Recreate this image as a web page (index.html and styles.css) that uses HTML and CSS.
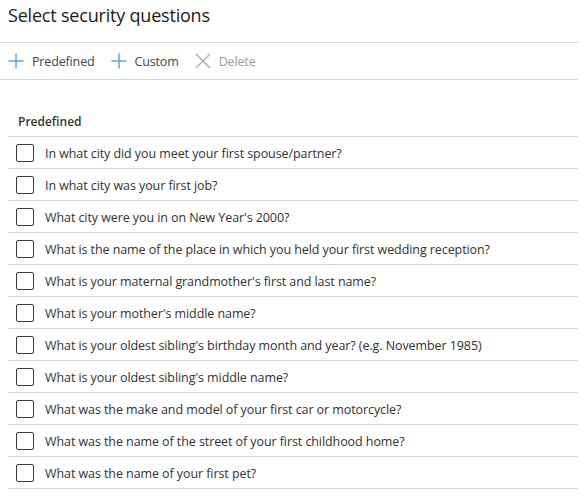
FILE: index.html
```html
<!DOCTYPE html>
<html>
<head>
<meta charset="utf-8">
<link rel="stylesheet" href="styles.css">
</head>
<body>
<div class="page">
  <h1 class="title">Select security questions</h1>
  <div class="toolbar">
    <button class="tool">
      <svg class="icon" viewBox="0 0 16 16"><path d="M8 0.5V15.5M0.5 8H15.5" stroke="#5ea6e2" stroke-width="1.5" fill="none"/></svg>
      <span>Predefined</span>
    </button>
    <button class="tool">
      <svg class="icon" viewBox="0 0 16 16"><path d="M8 0.5V15.5M0.5 8H15.5" stroke="#5ea6e2" stroke-width="1.5" fill="none"/></svg>
      <span>Custom</span>
    </button>
    <button class="tool disabled">
      <svg class="icon" viewBox="0 0 16 16"><path d="M1 1L15 15M15 1L1 15" stroke="#a6a6a6" stroke-width="1.2" fill="none"/></svg>
      <span>Delete</span>
    </button>
  </div>
  <div class="list">
    <div class="list-header">Predefined</div>
    <div class="row"><span class="check"></span><span class="label">In what city did you meet your first spouse/partner?</span></div>
    <div class="row"><span class="check"></span><span class="label">In what city was your first job?</span></div>
    <div class="row"><span class="check"></span><span class="label">What city were you in on New Year's 2000?</span></div>
    <div class="row"><span class="check"></span><span class="label">What is the name of the place in which you held your first wedding reception?</span></div>
    <div class="row"><span class="check"></span><span class="label">What is your maternal grandmother's first and last name?</span></div>
    <div class="row"><span class="check"></span><span class="label">What is your mother's middle name?</span></div>
    <div class="row"><span class="check"></span><span class="label">What is your oldest sibling's birthday month and year? (e.g. November 1985)</span></div>
    <div class="row"><span class="check"></span><span class="label">What is your oldest sibling's middle name?</span></div>
    <div class="row"><span class="check"></span><span class="label">What was the make and model of your first car or motorcycle?</span></div>
    <div class="row"><span class="check"></span><span class="label">What was the name of the street of your first childhood home?</span></div>
    <div class="row"><span class="check"></span><span class="label">What was the name of your first pet?</span></div>
  </div>
</div>
</body>
</html>
```
FILE: styles.css
```css
* { box-sizing: border-box; }
html, body { margin: 0; padding: 0; background: #fff; }
body {
  font-family: "Open Sans", "Noto Sans", "Liberation Sans", sans-serif;
  color: #323130;
  width: 580px;
}
.page { width: 580px; padding-right: 2px; }
.title {
  margin: 0;
  padding: 1px 8px 0 8px;
  height: 42px;
  font-size: 18px;
  font-weight: 400;
  line-height: 28px;
  color: #1b1b1b;
  letter-spacing: -0.2px;
}
.toolbar {
  display: flex;
  align-items: center;
  height: 38px;
  border-top: 1px solid #d6d6d6;
  border-bottom: 1px solid #d6d6d6;
  padding-left: 8px;
  gap: 16px;
}
.tool {
  display: flex;
  align-items: center;
  gap: 8px;
  border: 0;
  background: none;
  padding: 0;
  font: inherit;
  font-size: 12.5px;
  letter-spacing: -0.15px;
  color: #444;
}
.tool.disabled { color: #9a9a9a; }
.icon { width: 16px; height: 16px; display: block; }
.list { margin-left: 8px; }
.list-header {
  height: 57px;
  padding: 34px 0 0 10px;
  font-size: 12px;
  font-weight: 600;
  line-height: 16px;
  color: #333;
  border-bottom: 1px solid #d6d6d6;
}
.row {
  display: flex;
  align-items: center;
  height: 32px;
  border-bottom: 1px solid #d6d6d6;
  padding-left: 8px;
  gap: 11px;
}
.check {
  width: 18px;
  height: 18px;
  border: 1px solid #3b3b3b;
  border-radius: 2px;
  flex: none;
}
.label {
  font-size: 12.5px;
  color: #323130;
  white-space: nowrap;
  letter-spacing: -0.08px;
  padding-top: 1px;
}
```
